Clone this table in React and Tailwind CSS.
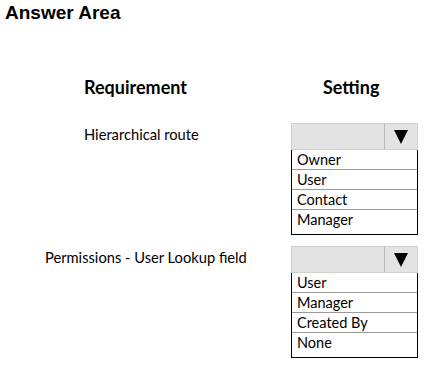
import React from "react";

const ROWS = [
  { label: "Hierarchical route", pad: "pl-[84px]", opts: ["Owner", "User", "Contact", "Manager"] },
  { label: "Permissions - User Lookup field", pad: "pl-[45px]", opts: ["User", "Manager", "Created By", "None"] },
];

function Dropdown({ opts }) {
  return (
    <div className="w-[127px]">
      <div className="h-[27px] flex bg-[#e3e3e3] border border-[#d0d0d0]">
        <div className="flex-1" />
        <div className="w-[33px] border-l border-[#b8b8b8] grid place-items-center">
          <svg width="14" height="14" viewBox="0 0 14 14">
            <path d="M0 0 H14 L7 14 Z" fill="#000" />
          </svg>
        </div>
      </div>
      <div className="border border-black border-t-0 pb-[4px]">
        {opts.map((o, i) => (
          <div
            key={o}
            className={`h-[20px] pl-[5px] leading-[19px] text-[14.5px] text-black ${i < opts.length - 1 ? "border-b border-[#9a9a9a]" : ""}`}
          >
            {o}
          </div>
        ))}
      </div>
    </div>
  );
}

export default function App() {
  return (
    <div className="w-[424px] h-[368px] bg-white text-black font-['Lato',sans-serif] overflow-hidden">
      <div className="pl-[5px] pt-[1px] text-[19px] font-bold font-['Liberation_Sans',Arial,sans-serif] leading-[24px]">
        Answer Area
      </div>

      <div className="flex mt-[50px] h-[24px] items-center">
        <div className="w-[291px] pl-[84px] text-[18px] font-bold">Requirement</div>
        <div className="pl-[32px] text-[18px] font-bold">Setting</div>
      </div>

      <div className="mt-[24px] space-y-[11px]">
        {ROWS.map((r) => (
          <div key={r.label} className="flex">
            <div className={`w-[291px] ${r.pad} pt-[1px] text-[14.7px] leading-[20px]`}>{r.label}</div>
            <Dropdown opts={r.opts} />
          </div>
        ))}
      </div>
    </div>
  );
}
